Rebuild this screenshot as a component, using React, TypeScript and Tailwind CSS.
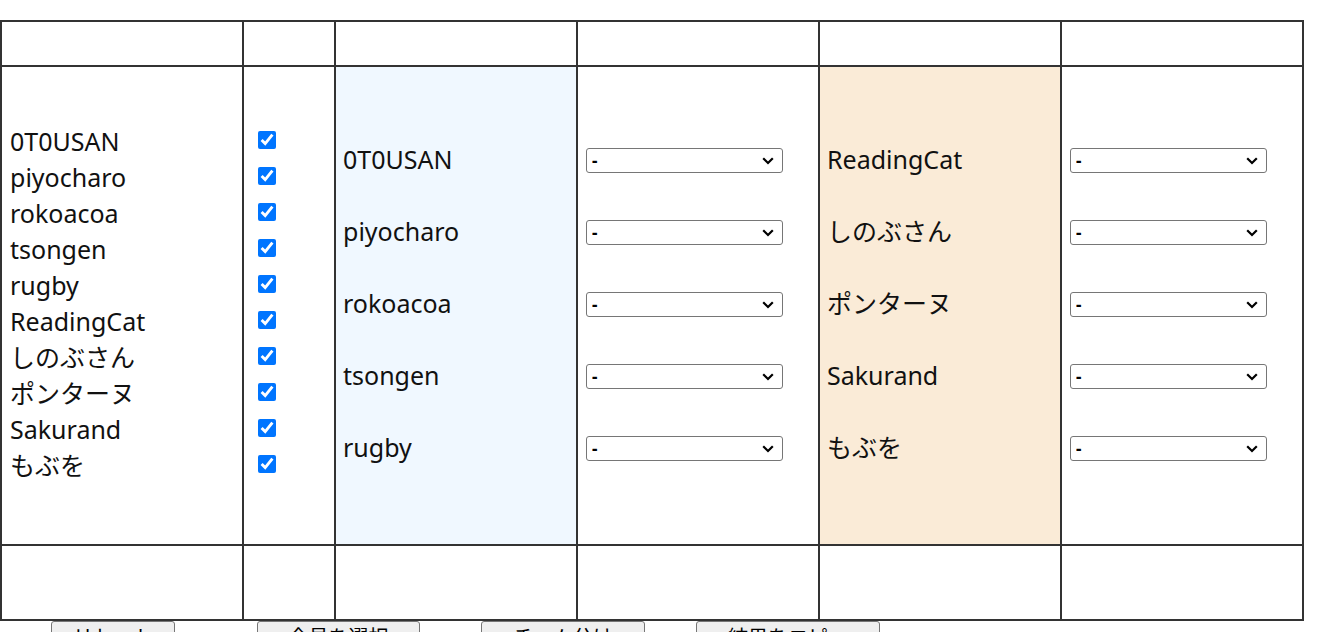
import React from "react";

const left = ["0T0USAN", "piyocharo", "rokoacoa", "tsongen", "rugby", "ReadingCat", "しのぶさん", "ポンターヌ", "Sakurand", "もぶを"];
const teamA = ["0T0USAN", "piyocharo", "rokoacoa", "tsongen", "rugby"];
const teamB = ["ReadingCat", "しのぶさん", "ポンターヌ", "Sakurand", "もぶを"];

const font = { fontFamily: '"Noto Sans", "Noto Sans CJK JP", sans-serif' };

function Sel() {
  return (
    <div className="relative w-[197px] h-[25px]">
      <select
        className="appearance-none w-[197px] h-[25px] border border-[#767676] rounded-[3px] bg-white text-[17px] font-bold text-black pl-[5px] leading-[23px]"
        defaultValue="-"
      >
        <option value="-">-</option>
      </select>
      <svg className="absolute right-[9px] top-[9px] pointer-events-none" width="12" height="8" viewBox="0 0 12 8">
        <path d="M1.2 1.2 L6 6 L10.8 1.2" fill="none" stroke="#000" strokeWidth="2.2" />
      </svg>
    </div>
  );
}

export default function App() {
  const cell = "border-2 border-[#333] p-0 align-middle";
  return (
    <div className="bg-white min-h-[632px] w-[1344px] overflow-hidden pt-[20px] text-[#111]" style={font}>
      <table className="border-collapse table-fixed w-[1302px]">
        <colgroup>
          <col className="w-[242px]" />
          <col className="w-[92px]" />
          <col className="w-[242px]" />
          <col className="w-[242px]" />
          <col className="w-[242px]" />
          <col className="w-[242px]" />
        </colgroup>
        <tbody>
          <tr className="h-[45px]">
            <td className={cell}></td>
            <td className={cell}></td>
            <td className={cell}></td>
            <td className={cell}></td>
            <td className={cell}></td>
            <td className={cell}></td>
          </tr>
          <tr className="h-[479px]">
            <td className={cell}>
              <div className="flex flex-col pl-[8px] text-[25px] leading-[36px] mt-[-6px]">
                {left.map((n) => (
                  <div key={n} className="h-[36px] whitespace-nowrap">{n}</div>
                ))}
              </div>
            </td>
            <td className={cell}>
              <div className="flex flex-col pl-[14px] mt-[-4px]">
                {left.map((n) => (
                  <div key={n} className="h-[36px] flex items-center">
                    <input type="checkbox" defaultChecked className="w-[18px] h-[18px] m-0 mt-[-4px]" />
                  </div>
                ))}
              </div>
            </td>
            <td className={`${cell} bg-[#f0f8ff]`}>
              <div className="flex flex-col pl-[7px] text-[25px]">
                {teamA.map((n) => (
                  <div key={n} className="h-[72px] flex items-center pb-[4px] whitespace-nowrap">{n}</div>
                ))}
              </div>
            </td>
            <td className={cell}>
              <div className="flex flex-col pl-[8px]">
                {teamA.map((n) => (
                  <div key={n} className="h-[72px] flex items-center pb-[2px]"><Sel /></div>
                ))}
              </div>
            </td>
            <td className={`${cell} bg-[#faebd7]`}>
              <div className="flex flex-col pl-[7px] text-[25px]">
                {teamB.map((n) => (
                  <div key={n} className="h-[72px] flex items-center pb-[4px] whitespace-nowrap">{n}</div>
                ))}
              </div>
            </td>
            <td className={cell}>
              <div className="flex flex-col pl-[8px]">
                {teamB.map((n) => (
                  <div key={n} className="h-[72px] flex items-center pb-[2px]"><Sel /></div>
                ))}
              </div>
            </td>
          </tr>
          <tr className="h-[75px]">
            <td className={cell}></td>
            <td className={cell}></td>
            <td className={cell}></td>
            <td className={cell}></td>
            <td className={cell}></td>
            <td className={cell}></td>
          </tr>
        </tbody>
      </table>
      <div className="flex items-start text-[20px] text-black">
        <button className="ml-[51px] w-[124px] h-[34px] bg-[#efefef] border border-[#767676] rounded-[3px]">リセット</button>
        <button className="ml-[82px] w-[163px] h-[34px] bg-[#efefef] border border-[#767676] rounded-[3px]">全員を選択</button>
        <button className="ml-[61px] w-[164px] h-[34px] bg-[#efefef] border border-[#767676] rounded-[3px]">チーム分け</button>
        <button className="ml-[51px] w-[184px] h-[34px] bg-[#efefef] border border-[#767676] rounded-[3px]">結果をコピー</button>
      </div>
    </div>
  );
}
